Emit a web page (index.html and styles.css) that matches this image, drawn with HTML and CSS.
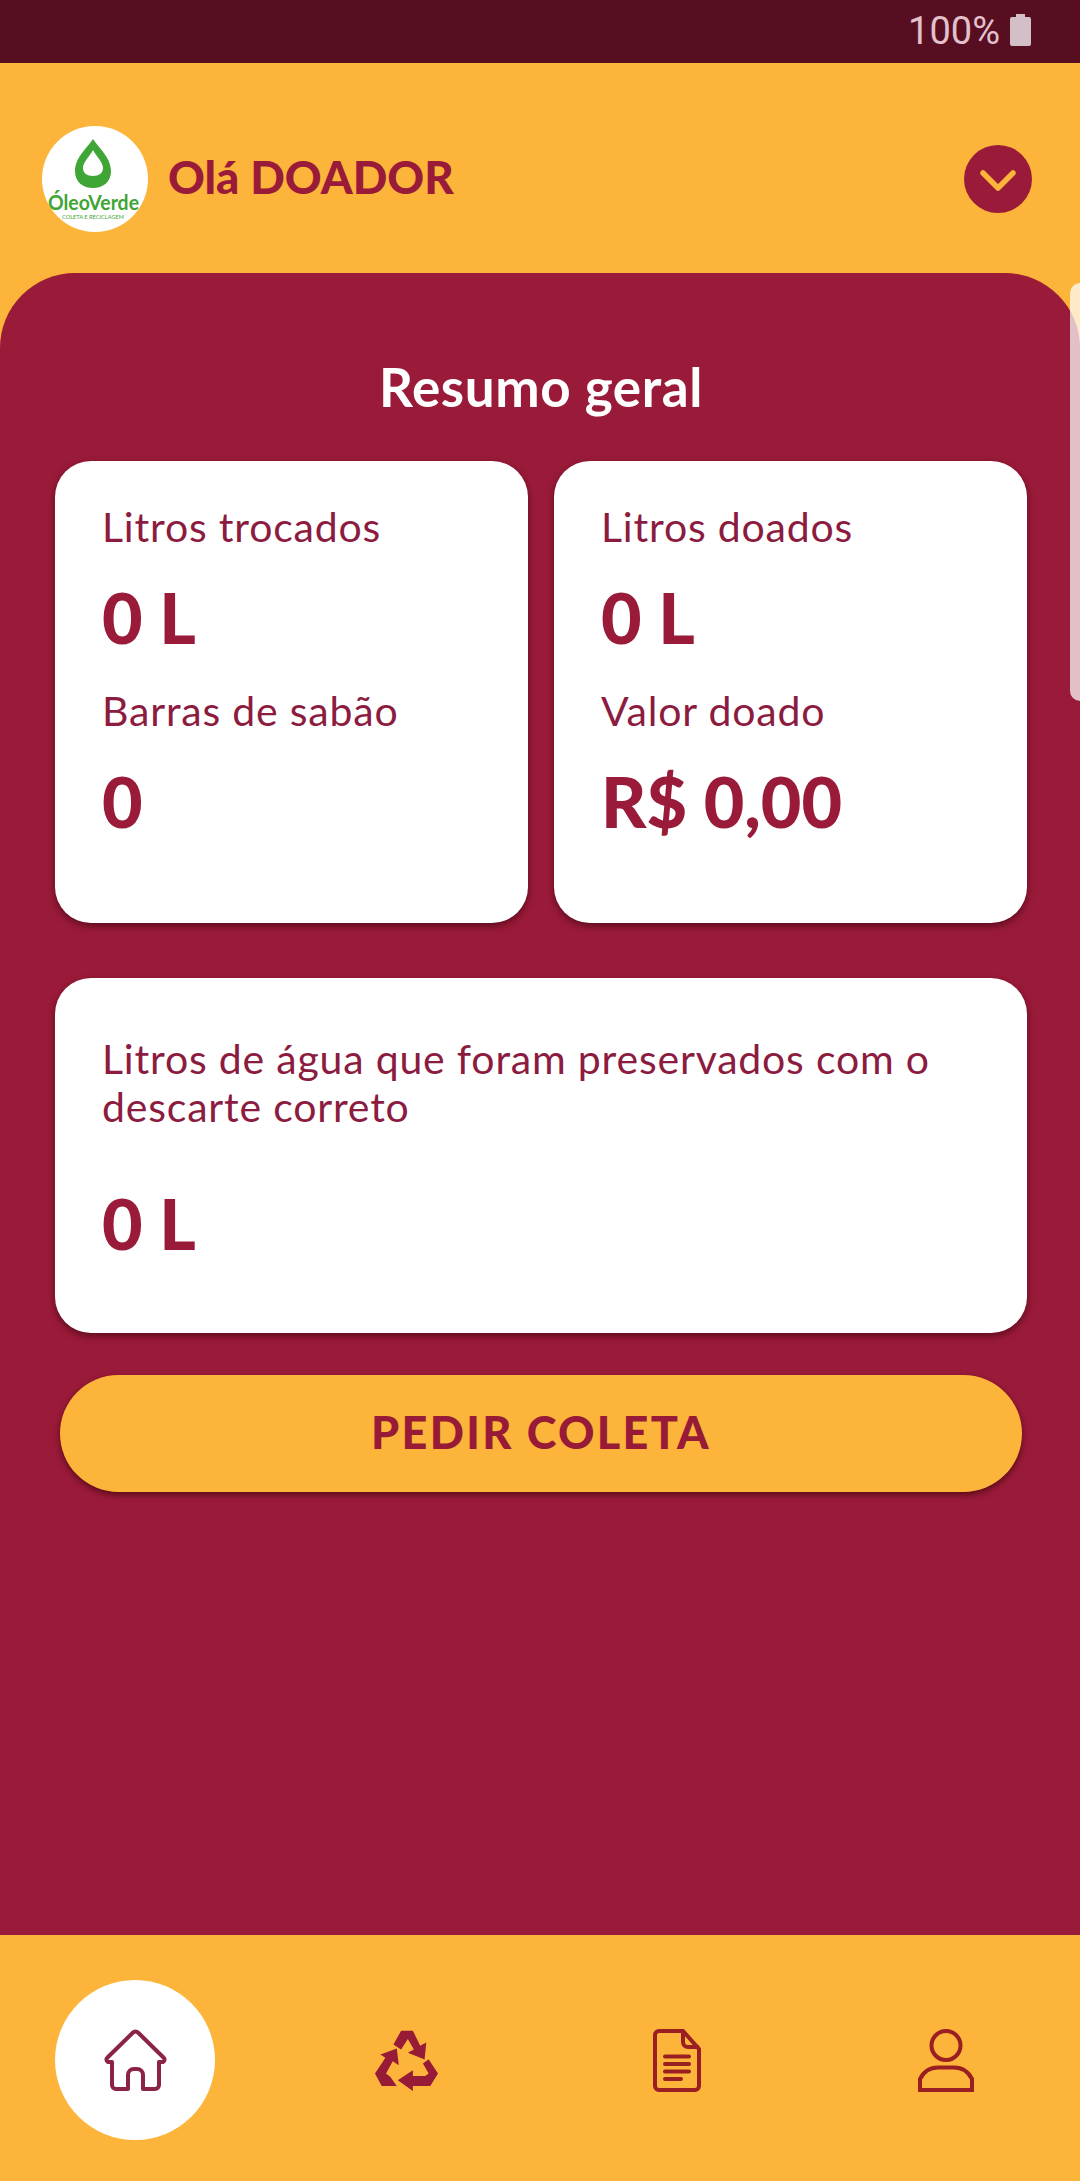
FILE: index.html
```html
<!DOCTYPE html>
<html lang="pt-BR">
<head>
<meta charset="utf-8">
<title>Resumo geral</title>
<link rel="stylesheet" href="styles.css">
</head>
<body>
<div class="app">
  <div class="status">
    <span class="status-text">100%</span>
    <svg class="battery" viewBox="0 0 21 32"><path d="M6 0h9v3h4a2 2 0 0 1 2 2v25a2 2 0 0 1-2 2H2a2 2 0 0 1-2-2V5a2 2 0 0 1 2-2h4z"/></svg>
  </div>
  <header class="header">
    <div class="logo">
      <svg viewBox="0 0 106 106" width="106" height="106">
        <path class="drop" d="M51 13 C47 20 33 31 33 45 C33 56 41 62 51 62 C61 62 69 56 69 45 C69 31 55 20 51 13Z"/>
        <path class="drop-in" d="M51 24 C48 30 41 36 41 42 C41 47 45 50 51 50 C57 50 61 47 61 42 C61 36 54 30 51 24Z"/>
        <text class="logo-name" x="6" y="84" textLength="91" lengthAdjust="spacingAndGlyphs">ÓleoVerde</text>
        <text class="logo-sub" x="20" y="93" textLength="62" lengthAdjust="spacingAndGlyphs">COLETA E RECICLAGEM</text>
      </svg>
    </div>
    <h1 class="greeting">Olá DOADOR</h1>
    <button class="chevron" aria-label="Abrir">
      <svg viewBox="0 0 68 68" width="68" height="68"><path d="M19 28 L34 43 L49 28"/></svg>
    </button>
  </header>
  <main class="panel">
    <div class="scroll-thumb"></div>
    <h2 class="title">Resumo geral</h2>
    <div class="cards">
      <section class="card card-half">
        <p class="label">Litros trocados</p>
        <p class="value">0 L</p>
        <p class="label">Barras de sabão</p>
        <p class="value">0</p>
      </section>
      <section class="card card-half">
        <p class="label">Litros doados</p>
        <p class="value">0 L</p>
        <p class="label">Valor doado</p>
        <p class="value">R$ 0,00</p>
      </section>
    </div>
    <section class="card card-wide">
      <p class="label">Litros de água que foram preservados com o descarte correto</p>
      <p class="value value-wide">0 L</p>
    </section>
    <button class="cta">PEDIR COLETA</button>
  </main>
  <nav class="nav">
    <div class="nav-item nav-active">
      <svg class="ic-home" viewBox="0 0 63 63" width="63" height="63"><path d="M29 3.5 L3.5 28.5 a2.5 2.5 0 0 0 1.5 4.5 H8 V56 a4 4 0 0 0 4 4 H24 V46 a6 6 0 0 1 6-6 h3 a6 6 0 0 1 6 6 V60 H51 a4 4 0 0 0 4-4 V33 H58 a2.5 2.5 0 0 0 1.5-4.5 L34 3.5 a3.5 3.5 0 0 0-5 0Z"/></svg>
    </div>
    <div class="nav-item">
      <svg class="ic-recycle" viewBox="72 25 188 182" width="63" height="61">
        <polygon points="127,68 150,27 185,27 207,72 225,62 220,113 170,93 188,83 170,52 150,83"/>
        <polygon points="88,98 137,80 143,130 125,118 105,155 118,165 137,192 92,192 72,155 103,108"/>
        <polygon points="232,112 260,155 237,192 185,192 185,207 140,175 185,145 185,162 222,162 232,155 215,125"/>
      </svg>
    </div>
    <div class="nav-item">
      <svg class="ic-line" viewBox="0 0 48 63" width="48" height="63">
        <path d="M6 2 H30 L46 20 V57 a4 4 0 0 1-4 4 H6 a4 4 0 0 1-4-4 V6 a4 4 0 0 1 4-4Z"/>
        <path d="M30 2 V13 a5 5 0 0 0 5 5 H46"/>
        <path class="round" d="M12 27.500 H36 M12 35 H36 M12 42.500 H36 M12 50 H28"/>
      </svg>
    </div>
    <div class="nav-item">
      <svg class="ic-line" viewBox="0 0 56 63" width="56" height="63">
        <circle cx="28" cy="16.500" r="14.500"/>
        <path d="M2 61 V50 C6 42 12 38.500 20 38.500 H36 C44 38.500 50 42 54 50 V61 Z"/>
      </svg>
    </div>
  </nav>
</div>
</body>
</html>
```
FILE: styles.css
```css
* { box-sizing: border-box; }
html, body { margin: 0; padding: 0; }
body { font-family: "Lato", "Noto Sans", sans-serif; background: #FCB53A; }
p, h1, h2 { margin: 0; }
button { border: 0; padding: 0; font: inherit; cursor: pointer; }

.app { width: 1080px; height: 2181px; display: flex; flex-direction: column; background: #FCB53A; overflow: hidden; }

.status { flex: 0 0 63px; background: #570E20; display: flex; align-items: center; justify-content: flex-end; padding-right: 49px; gap: 10px; }
.status-text { font-family: "Roboto", sans-serif; font-weight: 400; font-size: 38px; line-height: 63px; color: #E2C0CC; }
.battery { width: 21px; height: 32px; fill: #D2BFC8; margin-top: -3px; }

.header { flex: 0 0 210px; display: flex; align-items: center; padding: 21px 48px 0 42px; }
.logo { width: 106px; height: 106px; border-radius: 50%; background: #fff; margin-right: 20px; flex: none; }
.drop { fill: #3FA535; }
.drop-in { fill: #fff; }
.logo-name { font-family: "Lato", sans-serif; font-size: 20px; font-weight: 700; fill: #3FA535; }
.logo-sub { font-family: "Lato", sans-serif; font-size: 6px; fill: #3FA535; }
.greeting { font-size: 45.500px; line-height: 56px; font-weight: 900; color: #9A1A39; flex: 1; margin-top: -3px; }
.chevron { width: 68px; height: 68px; border-radius: 50%; background: #9A1A39; display: block; }
.chevron svg { display: block; }
.chevron path { fill: none; stroke: #FCB53A; stroke-width: 5.500; stroke-linecap: round; stroke-linejoin: round; }

.panel { flex: 1; position: relative; background: #9A1A39; border-radius: 75px 75px 0 0; padding: 0 53px 0 55px; }
.scroll-thumb { position: absolute; top: 10px; right: 0; width: 10px; height: 418px; background: rgba(255,255,255,.72); border-radius: 14px 0 0 14px; }
.title { height: 188px; display: flex; align-items: center; justify-content: center; font-size: 53px; font-weight: 700; letter-spacing: .6px; color: #fff; padding-top: 38px; }

.cards { display: grid; grid-template-columns: 473px 473px; gap: 26px; }
.card { background: #fff; border-radius: 36px; box-shadow: 0 3px 7px rgba(40,0,10,.55); padding: 0 47px; }
.card-half { height: 462px; padding-top: 42px; }
.card-wide { height: 355px; margin-top: 55px; padding-top: 57px; }

.label { font-size: 41px; line-height: 48px; letter-spacing: .8px; color: #8C1C3F; }
.value { font-size: 70px; line-height: 82px; font-weight: 900; color: #9A1A39; margin-top: 25px; margin-bottom: 29px; }
.value-wide { margin-top: 51px; }

.cta { display: block; width: 962px; height: 117px; margin: 42px 0 0 5px; padding-bottom: 4px; border-radius: 59px; background: #FCB53A; color: #971A37; font-size: 45px; font-weight: 900; letter-spacing: 2.3px; box-shadow: 0 3px 6px rgba(50,0,0,.6); }

.nav { flex: 0 0 246px; display: grid; grid-template-columns: 270px 272px 270px 268px; align-items: center; justify-items: center; background: #FCB53A; padding-top: 4px; }
.nav-item { width: 160px; height: 160px; border-radius: 50%; display: flex; align-items: center; justify-content: center; }
.nav-active { background: #fff; }
.ic-home path { fill: none; stroke: #8B2248; stroke-width: 4; stroke-linejoin: round; }
.ic-recycle polygon { fill: #971A37; }
.ic-line path, .ic-line circle { fill: none; stroke: #9A1F22; stroke-width: 4; }
.ic-line .round { stroke-linecap: round; }
```
